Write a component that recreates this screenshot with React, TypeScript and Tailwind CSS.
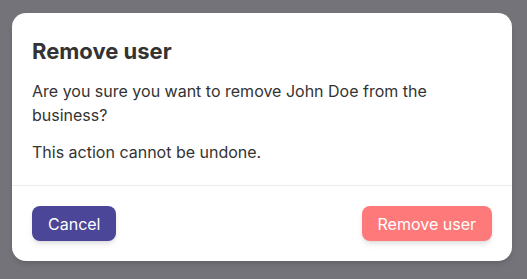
const App = () => {
  return (
    <div className="min-h-screen w-full bg-[#747379] pl-3 pt-[13px]" style={{ fontFamily: "Inter, 'Noto Sans', sans-serif" }}>
      <div className="w-[500px] bg-white rounded-[14px] shadow-md flex flex-col">
        <div className="px-5 pt-[22px] pb-[21px] text-[#333333]">
          <h2 className="text-[22px] font-bold leading-8">Remove user</h2>
          <p className="mt-[12px] text-base leading-6">Are you sure you want to remove John Doe from the business?</p>
          <p className="mt-[13px] text-base leading-6">This action cannot be undone.</p>
        </div>
        <div className="h-px bg-[#ececec]" />
        <div className="flex flex-row justify-between items-center px-5 pt-5 pb-5">
          <button className="h-[35px] px-4 rounded-lg bg-[#4b4697] text-white text-base shadow-md">Cancel</button>
          <button className="h-[35px] px-4 rounded-lg bg-[#fe7a7a] text-white text-base shadow-md">Remove user</button>
        </div>
      </div>
    </div>
  )
}

export default App
